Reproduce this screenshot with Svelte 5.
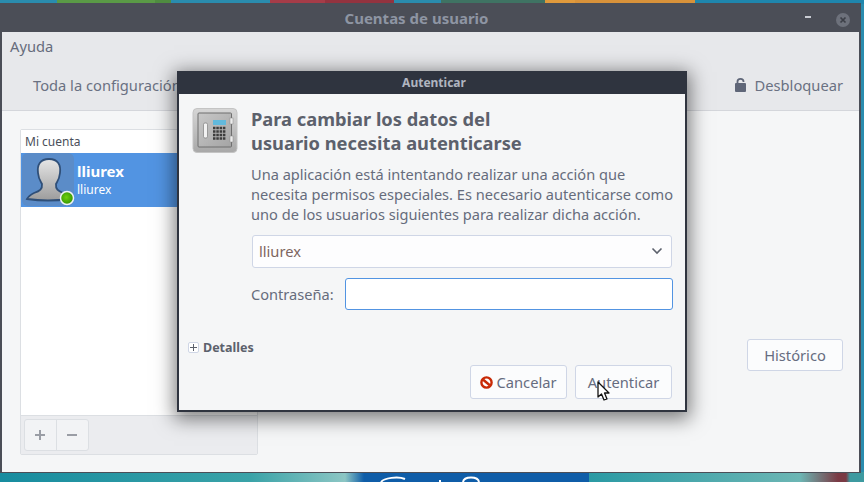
<script>
	const items = [
		'Para cambiar los datos del',
		'usuario necesita autenticarse'
	];
	const message = [
		'Una aplicación está intentando realizar una acción que',
		'necesita permisos especiales. Es necesario autenticarse como',
		'uno de los usuarios siguientes para realizar dicha acción.'
	];
</script>

<div class="desktop">
	<svg class="scribble" width="120" height="9" viewBox="0 0 120 9">
		<path d="M3 9 C6 5 20 3 27 6 M62 9 V7 M85 9 C86 3 100 3 101 9" fill="none" stroke="#fff" stroke-width="2" />
	</svg>

	<div class="window">
		<div class="titlebar">
			<span class="title">Cuentas de usuario</span>
			<span class="minimize"></span>
			<span class="close">
				<svg width="14" height="14" viewBox="0 0 14 14">
					<circle cx="7" cy="7" r="7" fill="#6d717b" />
					<path d="M4.500 4.500 L9.500 9.500 M9.500 4.500 L4.500 9.500" stroke="#3c3f47" stroke-width="1.700" />
				</svg>
			</span>
		</div>
		<div class="menubar">Ayuda</div>
		<div class="toolbar">
			<span class="back">Toda la configuración</span>
			<span class="unlock">
				<svg width="11" height="14" viewBox="0 0 11 14">
					<path d="M2.500 6 V3.500 A3 2.600 0 0 1 8.500 3.500 V4" fill="none" stroke="#5f6678" stroke-width="1.800" />
					<rect x="0" y="5" width="11" height="9" rx="1" fill="#5f6678" />
				</svg>
				Desbloquear
			</span>
		</div>
		<div class="content">
			<div class="accounts">
				<div class="list">
					<div class="list-head">Mi cuenta</div>
					<div class="row">
						<div class="avatar">
							<svg width="54" height="54" viewBox="0 0 54 54">
								<defs>
									<linearGradient id="bust" x1="0" y1="0" x2="0" y2="1">
										<stop offset="0" stop-color="#e6e6e6" />
										<stop offset="1" stop-color="#9c9c9c" />
									</linearGradient>
									<radialGradient id="dot" cx="0.45" cy="0.45" r="0.6">
										<stop offset="0" stop-color="#6fd00e" />
										<stop offset="1" stop-color="#2f8f00" />
									</radialGradient>
								</defs>
								<rect x="1" y="0" width="52" height="53" rx="6" fill="#5b8cc8" />
								<path d="M28 6 C19 6 16 12 17 20 C17.500 26 20 29 21 31 C21.500 36 19 38 13 40 C9 42 7 44 6 46 Q27 49 48 46 C47 44 45 42 42 40 C37 38 34.500 36 35 31 C36 29 38.500 26 39 20 C40 12 37 6 28 6 Z" fill="url(#bust)" stroke="#2f4f78" stroke-width="1.800" />
								<circle cx="46" cy="45" r="6.500" fill="url(#dot)" stroke="#eef2f6" stroke-width="1.500" />
							</svg>
						</div>
						<div class="names">
							<strong>lliurex</strong>
							<span>lliurex</span>
						</div>
					</div>
				</div>
				<div class="list-tools">
					<div class="linked">
						<span class="tool">
							<svg width="12" height="12" viewBox="0 0 12 12"><path d="M6 1 V11 M1 6 H11" stroke="#9a9da5" stroke-width="2" /></svg>
						</span>
						<span class="tool">
							<svg width="12" height="12" viewBox="0 0 12 12"><path d="M1 6 H11" stroke="#9a9da5" stroke-width="2" /></svg>
						</span>
					</div>
				</div>
			</div>
			<button class="btn history">Histórico</button>
		</div>
	</div>

	<div class="dialog">
		<div class="dialog-title">Autenticar</div>
		<div class="dialog-body">
			<div class="main">
				<svg class="safe" width="46" height="46" viewBox="0 0 46 46">
					<defs>
						<linearGradient id="safeBody" x1="0" y1="0" x2="0" y2="1">
							<stop offset="0" stop-color="#d6d6d6" />
							<stop offset="1" stop-color="#a8a8a8" />
						</linearGradient>
						<linearGradient id="safeDoor" x1="0" y1="0" x2="1" y2="1">
							<stop offset="0" stop-color="#c8c8c8" />
							<stop offset="1" stop-color="#a4a4a4" />
						</linearGradient>
					</defs>
					<rect x="1" y="0.500" width="44" height="44" rx="4" fill="url(#safeBody)" stroke="#c4c4c4" />
					<rect x="6" y="5" width="33.500" height="34" rx="1" fill="url(#safeDoor)" stroke="#6f6f6f" />
					<rect x="11.500" y="15" width="4" height="15" rx="1.500" fill="#f2f2f2" stroke="#707070" stroke-width="0.600" />
					<rect x="21" y="12" width="13" height="5" fill="#62b9dc" />
					<path d="M21 20 H34 M21 23.500 H34 M21 27 H34 M21 30.500 H34" stroke="#3c3c3c" stroke-width="2.400" stroke-dasharray="2.500 0.800" />
					<rect x="38" y="10" width="3" height="6" fill="#ececec" stroke="#888" stroke-width="0.500" />
					<rect x="38" y="28" width="3" height="6" fill="#ececec" stroke="#888" stroke-width="0.500" />
				</svg>
				<div class="text">
					<h1>{#each items as line}<span>{line}</span>{/each}</h1>
					<p>{#each message as line}<span>{line}</span>{/each}</p>
					<div class="combo">
						<span>lliurex</span>
						<svg width="12" height="8" viewBox="0 0 12 8"><path d="M1.500 1.500 L6 6 L10.500 1.500" fill="none" stroke="#5c616c" stroke-width="1.600" /></svg>
					</div>
					<div class="password">
						<span>Contraseña:</span>
						<div class="entry"></div>
					</div>
				</div>
			</div>
			<div class="details">
				<span class="expander">
					<svg width="7" height="7" viewBox="0 0 7 7"><path d="M3.500 0 V7 M0 3.500 H7" stroke="#5c616c" /></svg>
				</span>
				<span>Detalles</span>
			</div>
			<div class="actions">
				<button class="btn cancel">
					<svg width="13" height="13" viewBox="0 0 14 14">
						<circle cx="7" cy="7" r="5.500" fill="#fff" stroke="#c82a06" stroke-width="2.600" />
						<path d="M3.500 4 L10.500 10" stroke="#c82a06" stroke-width="2.600" />
					</svg>
					Cancelar
				</button>
				<button class="btn">Autenticar</button>
			</div>
		</div>
	</div>

	<svg class="cursor" width="15" height="21" viewBox="0 0 15 21">
		<path d="M1 1 V16 L4.500 13 L7 19 L10 18 L7.500 12 H12 Z" fill="#fff" stroke="#111" stroke-width="1.300" stroke-linejoin="round" />
	</svg>
</div>

<style>
	:global(body) {
		margin: 0;
	}

	.desktop {
		position: relative;
		width: 864px;
		height: 482px;
		overflow: hidden;
		font-family: "Noto Sans", sans-serif;
		color: #5c616c;
		background:
			linear-gradient(90deg, #2a8cae 0, #2a8cae 57px, #5a9a46 57px, #5a9a46 155px, #4f8c40 155px, #4f8c40 171px, #2a8cae 171px, #2a8cae 270px, #a53c48 270px, #a53c48 325px, #93333f 325px, #93333f 394px, #2a8cae 394px, #2a8cae 441px, #3f7363 441px, #3f7363 545px, #e09a3c 545px, #e09a3c 575px, #d8923a 575px, #d8923a 695px, #1f86ad 695px) top / 100% 4px no-repeat,
			linear-gradient(90deg, #178c9f 0, #3aa3a8 250px, #8cc6c4 345px, #0f5da8 364px, #0f5da8 589px, #2a9aa4 589px, #6cb6b4 800px, #7a3a44 838px, #7a3a44 846px, #3d9aa0 850px) bottom / 100% 10px no-repeat,
			#2a8cae;
	}

	.scribble {
		position: absolute;
		left: 378px;
		top: 473px;
	}

	.window {
		position: absolute;
		left: 0;
		top: 3px;
		width: 857px;
		height: 469px;
		display: flex;
		flex-direction: column;
		border: 2px solid #4b4e57;
		border-top: 0;
		border-bottom-width: 1px;
		background: #f5f6f7;
	}

	.titlebar {
		flex: 0 0 29px;
		position: relative;
		display: flex;
		align-items: center;
		justify-content: center;
		box-sizing: border-box;
		padding: 1px 28px 0 0;
		background: #4b4e57;
		margin: 0 -2px;
	}

	.title {
		font-size: 15px;
		font-weight: 700;
		color: #8e95a3;
	}

	.minimize {
		position: absolute;
		left: 805px;
		top: 13px;
		width: 6px;
		height: 2px;
		background: #c9ccd3;
	}

	.close {
		position: absolute;
		left: 836px;
		top: 7px;
		height: 14px;
	}

	.menubar {
		flex: 0 0 30px;
		box-sizing: border-box;
		padding: 4px 8px 0;
		font-size: 14.700px;
		background: #e7e8eb;
		color: #666c7c;
	}

	.toolbar {
		flex: 0 0 49px;
		box-sizing: border-box;
		display: flex;
		justify-content: space-between;
		align-items: center;
		padding: 0 16px 3px 31px;
		background: #e7e8eb;
		border-bottom: 1px solid #d4d6db;
		font-size: 14.700px;
		color: #6a7182;
	}

	.unlock {
		display: flex;
		align-items: center;
		gap: 9px;
	}

	.content {
		flex: 1;
		display: flex;
		justify-content: space-between;
		padding: 18px 16px 17px 18px;
		position: relative;
	}

	.accounts {
		width: 238px;
		display: flex;
		flex-direction: column;
		box-sizing: border-box;
		border: 1px solid #dcdfe3;
		border-radius: 2px;
	}

	.list {
		flex: 1;
		background: #fff;
	}

	.list-head {
		height: 23px;
		padding: 3px 4px 0;
		box-sizing: border-box;
		font-size: 12px;
		color: #4a4f5a;
	}

	.row {
		height: 54px;
		display: flex;
		background: #5294e2;
		color: #fff;
	}

	.avatar {
		width: 56px;
		height: 54px;
	}

	.names {
		display: flex;
		flex-direction: column;
		padding-top: 8px;
		font-size: 12px;
		line-height: 18px;
	}

	.names strong {
		font-size: 15px;
		line-height: 20px;
	}

	.list-tools {
		flex: 0 0 39px;
		box-sizing: border-box;
		padding: 3px;
		background: #ebecef;
		border-top: 1px solid #dcdfe3;
	}

	.linked {
		display: inline-flex;
		border: 1px solid #dcdfe3;
		border-radius: 3px;
		background: #f2f3f5;
	}

	.tool {
		width: 31px;
		height: 30px;
		display: flex;
		align-items: center;
		justify-content: center;
	}

	.tool svg {
		margin-right: 1px;
	}

	.tool + .tool {
		border-left: 1px solid #dcdfe3;
	}

	.btn {
		display: flex;
		align-items: center;
		justify-content: center;
		gap: 4px;
		width: 97px;
		height: 34px;
		padding: 0;
		box-sizing: border-box;
		font: 14.700px "Noto Sans", sans-serif;
		color: #666c80;
		background: #fbfcfd;
		border: 1px solid #cfd6e6;
		border-radius: 3px;
	}

	.cancel {
		gap: 3px;
	}

	.history {
		width: 96px;
		height: 32px;
		margin-top: 210px;
	}

	.dialog {
		position: absolute;
		left: 177px;
		top: 71px;
		width: 510px;
		height: 341px;
		box-sizing: border-box;
		display: flex;
		flex-direction: column;
		border: 2px solid #2f343f;
		border-top: 0;
		background: #f5f6f7;
		box-shadow: 0 4px 18px 3px rgba(0, 0, 0, 0.5);
	}

	.dialog-title {
		flex: 0 0 23px;
		margin: 0 -2px;
		box-sizing: border-box;
		padding-left: 4px;
		display: flex;
		align-items: center;
		justify-content: center;
		font-size: 12px;
		font-weight: 700;
		color: #b0b5c0;
		background: #2f343f;
	}

	.dialog-body {
		flex: 1;
		display: flex;
		flex-direction: column;
		padding: 13px 13px 11px 9px;
	}

	.main {
		display: flex;
		padding-left: 4px;
	}

	.safe {
		flex: none;
		margin-top: 1px;
	}

	.text {
		margin-left: 13px;
		flex: 1;
		min-width: 0;
	}

	h1 {
		margin: 0;
		font-size: 18.300px;
		line-height: 24px;
		font-weight: 700;
		color: #5c616c;
	}

	h1 span,
	p span {
		display: block;
		white-space: nowrap;
	}

	p {
		margin: 9px 0 0;
		font-size: 14.600px;
		line-height: 20px;
		color: #666c7c;
	}

	.combo {
		margin: 11px 0 0 1px;
		height: 33px;
		width: 420px;
		box-sizing: border-box;
		display: flex;
		align-items: center;
		justify-content: space-between;
		padding: 0 8px 2px 6px;
		font-size: 14.700px;
		color: #7d6560;
		background: #fdfdfe;
		border: 1px solid #cfd6e6;
		border-radius: 3px;
	}

	.password {
		margin: 10px -1px 0 0;
		display: flex;
		align-items: center;
		justify-content: space-between;
		font-size: 14.600px;
		color: #666c7c;
	}

	.entry {
		width: 328px;
		height: 32px;
		box-sizing: border-box;
		background: #fff;
		border: 1px solid #5294e2;
		border-radius: 3px;
	}

	.details {
		margin-top: 29px;
		display: flex;
		align-items: center;
		gap: 4px;
		height: 16px;
		font-size: 12.500px;
		font-weight: 700;
		color: #5c616c;
	}

	.expander {
		width: 11px;
		height: 11px;
		box-sizing: border-box;
		display: flex;
		align-items: center;
		justify-content: center;
		background: #fff;
		border: 1px solid #cfd6e6;
		border-radius: 2px;
	}

	.actions {
		margin-top: auto;
		display: flex;
		justify-content: flex-end;
		gap: 8px;
	}

	.cursor {
		position: absolute;
		left: 597px;
		top: 381px;
	}
</style>
